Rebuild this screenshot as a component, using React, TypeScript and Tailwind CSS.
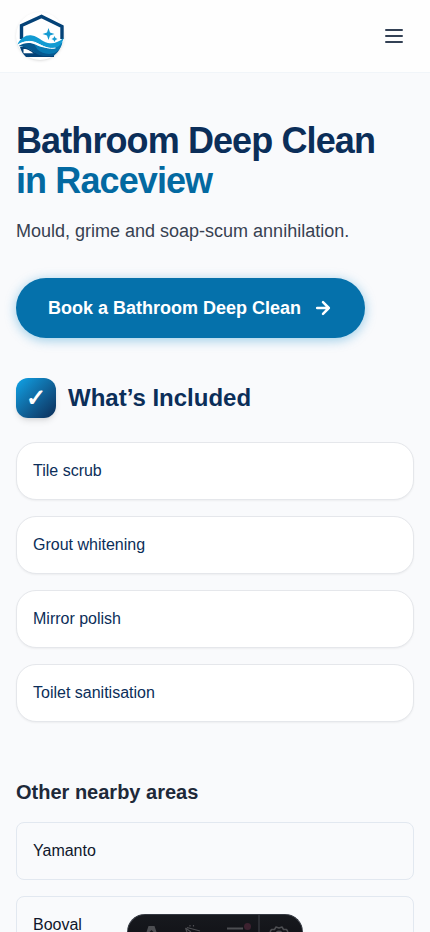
const included = ["Tile scrub", "Grout whitening", "Mirror polish", "Toilet sanitisation"];
const areas = ["Yamanto", "Booval"];

function Logo() {
  return (
    <svg viewBox="0 0 48 48" className="size-12" aria-hidden="true">
      <path d="M5.500 27V13.500L25.500 4.500 46 14.500V27" fill="#fff" stroke="#044277" strokeWidth="3.400" />
      <path d="M4 35h6l10 6h18V45H10C7 42 5 39 4 35Z" fill="#044277" />
      <path d="M7.500 37V41.200h10C14 39 12 37 7.500 37Z" fill="#fff" />
      <path d="M2.500 34c6-3.500 12-4 17-1 8 5 18 7 26-2-1 6-4 10-8 13H27c-8-1-13-9-24.500-10Z" fill="#06588f" />
      <path d="M18 32c9 5 19 6 28.500-2-1 5-3 8-7 10.500-6 3-14 1-18-3Z" fill="#0879b2" />
      <path d="M1.500 32.500C4.500 26 10 22.500 16 23.500c7 1 9 6 16 7.500 6 1 11-1 15.500-5-1 6-5 9.500-10 10-7 .5-12-3-18-5.500-6-2.300-12-1.500-18 2Z" fill="#129bd2" />
      <path d="M2.500 33c6-4 12-4.700 18-2 7 3.500 12 6.500 19 5" fill="none" stroke="#fff" strokeWidth="1" />
      <path d="m32.500 16 1.500 4.500 4.500 1.500-4.500 1.500-1.500 4.500-1.500-4.500-4.500-1.500 4.500-1.500ZM38.500 24l1 2 2 1-2 1-1 2-1-2-2-1 2-1Z" fill="#159bd2" />
    </svg>
  );
}

function DevToolbar() {
  return (
    <div className="pointer-events-none fixed inset-x-0 bottom-0 flex justify-center" aria-hidden="true">
      <div className="h-[18px] w-44 overflow-hidden rounded-t-[20px] border border-b-0 border-[#343841] bg-linear-to-b from-[#17191e] to-[#131419]">
        <svg viewBox="0 0 174 17" className="h-[17px] w-full" fill="none">
          <path d="M18.500 17 20.500 11h6L28.500 17h-3L23.500 15 21.500 17Z" fill="#4d4e52" />
          <path d="M57.500 13 63 17M57.500 13 59 17M59 12.500 72 16M62 11.500v-1.500M65.500 11.500v-1.500" stroke="#4d4e52" strokeWidth="1.200" />
          <path d="M99 13.500h16" stroke="#4d4e52" strokeWidth="2" />
          <circle cx="119.500" cy="11.500" r="3.500" fill="#3d2230" />
          <path d="M131 0v17" stroke="#2b2d33" strokeWidth="2" />
          <path d="M142 17l1.500-2.500h3L148 12l3 1 3-1 1.500 2.500h3L160 17M148.500 17c1-1 4-1 5 0" stroke="#4d4e52" strokeWidth="1.500" strokeLinejoin="round" />
        </svg>
      </div>
    </div>
  );
}

export default function App() {
  return (
    <div className="min-h-screen bg-[#f9fafc] font-['Liberation_Sans',Arial,sans-serif] text-base text-slate-900">
      <header className="flex items-center justify-between border-b border-[#f1f5f9] bg-[#fefefe] px-4 py-3">
        <a href="#home" aria-label="Home" className="rounded-full bg-white shadow-sm">
          <Logo />
        </a>
        <button type="button" aria-label="Open menu" className="p-2 text-[#334155]">
          <svg viewBox="0 0 24 24" className="size-6" fill="none" stroke="currentColor" strokeWidth="2" strokeLinecap="round">
            <path d="M4 6h16M4 12h16M4 18h16" />
          </svg>
        </button>
      </header>

      <main className="px-4 py-12">
        <h1 className="text-4xl font-bold tracking-tight text-[#0b2e59]">
          Bathroom Deep Clean <span className="block text-[#0369a1]">in Raceview</span>
        </h1>
        <p className="mt-4 text-lg leading-[29px] text-[#374151]">Mould, grime and soap-scum annihilation.</p>
        <a
          href="#book"
          className="mt-8 inline-flex items-center gap-3 rounded-full bg-[#0571ab] px-8 py-4 text-lg font-semibold text-white shadow-[0_2px_12px_rgba(2,132,199,0.4)]"
        >
          Book a Bathroom Deep Clean
          <svg viewBox="0 0 24 24" className="size-5" fill="none" stroke="currentColor" strokeWidth="3" strokeLinecap="round" strokeLinejoin="round" aria-hidden="true">
            <path d="M5 12h14M12 5l7 7-7 7" />
          </svg>
        </a>

        <section className="mt-10">
          <h2 className="flex items-center gap-3 text-2xl font-bold text-[#0b2e59]">
            <span className="flex size-10 items-center justify-center rounded-xl bg-linear-to-br from-[#0ea5e9] to-[#0b2e59] text-white shadow-md" aria-hidden="true">
              ✓
            </span>
            What’s Included
          </h2>
          <ul className="mt-6 grid gap-4">
            {included.map((item) => (
              <li key={item} className="rounded-[20px] border border-gray-200 bg-white p-4 text-[#0b2e59] shadow-[0_1px_2px_rgba(0,0,0,0.05)]">
                {item}
              </li>
            ))}
          </ul>
        </section>

        <section className="mt-14">
          <h2 className="text-xl font-semibold text-gray-800">Other nearby areas</h2>
          <ul className="mt-4 grid gap-4">
            {areas.map((area) => (
              <li key={area}>
                <a href={"#" + area.toLowerCase()} className="block rounded-lg border border-slate-200 p-4">
                  {area}
                </a>
              </li>
            ))}
          </ul>
        </section>
      </main>
      <DevToolbar />
    </div>
  );
}
